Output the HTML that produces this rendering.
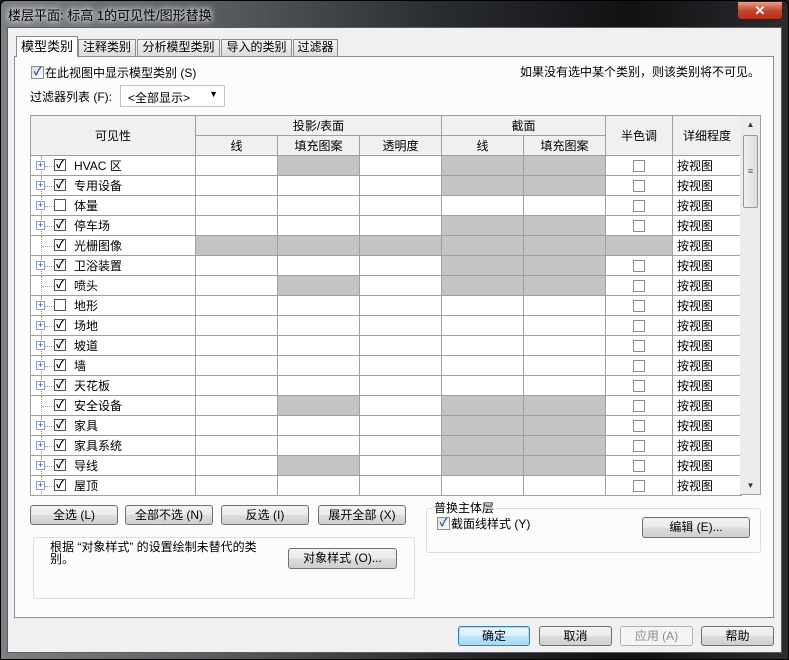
<!DOCTYPE html>
<html><head><meta charset="utf-8"><style>
*{box-sizing:border-box;margin:0;padding:0}
body{width:789px;height:660px;overflow:hidden;background:#1a1c1f;font-family:"Liberation Sans","Noto Sans CJK SC",sans-serif;font-size:12px;color:#000;position:relative}
.abs{position:absolute}
#frame{left:0;top:0;width:789px;height:660px;background:linear-gradient(90deg,#7c8085 0%,#5c6066 25%,#2a2d31 55%,#101113 80%,#2a2c2f 100%);border:1px solid #000;border-radius:6px 6px 0 0}
#title{left:8px;top:5px;font-size:13px;color:#000;text-shadow:0 0 6px #fff,0 0 8px #fff}
#close{left:737px;top:1px;width:46px;height:19px;border:1px solid #3b1a14;border-radius:0 0 4px 4px;background:linear-gradient(#e8a08c,#c7452c 50%,#b3301a);color:#fff;font-weight:bold;text-align:center;font-size:13px;line-height:17px}
#client{left:7px;top:27px;width:775px;height:626px;background:#f0f0f0;border:1px solid #5b5f64}
.tab{top:39px;height:17px;border:1px solid #898c95;border-bottom:none;background:linear-gradient(#f2f2f2,#dcdcdc);font-size:12px;text-align:center;line-height:15px}
.tab.sel{top:36px;height:21px;background:#fcfcfc;z-index:2;line-height:20px;font-size:13px}
#panel{left:14px;top:56px;width:760px;height:562px;border:1px solid #898c95;background:#fcfcfc}
.chk{width:13px;height:13px;border:1px solid #8e8f8f;background:linear-gradient(135deg,#dcdcdc,#fff);font-size:11px;line-height:11px;color:#2b4a9a;text-align:center;font-weight:bold}
table{border-collapse:collapse;table-layout:fixed;position:absolute;left:30px;top:115px}
td{border:1px solid #a0a0a0;height:20px;padding:0;background:#fff;font-size:12px;white-space:nowrap;overflow:hidden}
th{border:1px solid #a0a0a0;border-color:#a0a0a0;height:20px;background:#f0f0f0;font-weight:normal;font-size:12px}
td.h{background:repeating-conic-gradient(#8a8a8a 0 25%,#fff 0 50%) 0 0/2px 2px}
td.c{text-align:center}
.sq{display:inline-block;width:12px;height:12px;border:1px solid #8a8a8a;vertical-align:middle;background:#fff}
td.v{position:relative;padding-left:43px}
.pl{position:absolute;left:5px;top:5px;width:9px;height:9px;border:1px solid #8aa0c0;background:#fff;font-size:9px;line-height:7px;text-align:center;color:#2a3f80}
.dl{position:absolute;left:10px;top:0;height:20px;border-left:1px dotted #999}
.dh{position:absolute;left:14px;top:10px;width:9px;border-top:1px dotted #999}
.dh2{left:11px;width:12px}
.cb{position:absolute;left:23px;top:3px;width:12px;height:12px;border:1px solid #555;background:#fff;font-size:11px;line-height:10px;text-align:center;font-weight:bold}
td.d{padding-left:4px}
.btn{height:20px;border:1px solid #707070;border-radius:3px;background:linear-gradient(#f2f2f2 0,#ebebeb 50%,#dddddd 51%,#cfcfcf);text-align:center;line-height:18px;font-size:12px}
.grp{border:1px solid #d5dfe5;border-radius:3px}
</style></head><body>
<div id="frame" class="abs"></div>
<div id="title" class="abs">楼层平面: 标高 1的可见性/图形替换</div>
<div id="close" class="abs">✕</div>
<div id="client" class="abs"></div>
<div id="panel" class="abs"></div>
<div class="abs tab sel" style="left:16px;width:62px">模型类别</div>
<div class="abs tab" style="left:78px;width:58px">注释类别</div>
<div class="abs tab" style="left:137px;width:83px">分析模型类别</div>
<div class="abs tab" style="left:221px;width:71px">导入的类别</div>
<div class="abs tab" style="left:293px;width:45px">过滤器</div>

<div class="abs chk" style="left:31px;top:66px">✓</div>
<div class="abs" style="left:45px;top:64px">在此视图中显示模型类别 (S)</div>
<div class="abs" style="left:520px;top:63px">如果没有选中某个类别，则该类别将不可见。</div>
<div class="abs" style="left:30px;top:88px">过滤器列表 (F):</div>
<div class="abs" style="left:120px;top:85px;width:105px;height:22px;border:1px solid #c5c5c5;background:#fff;padding:3px 0 0 7px">&lt;全部显示&gt;<span style="position:absolute;right:6px;top:3px;font-size:9px">▼</span></div>

<table>
<colgroup><col style="width:165px"><col style="width:82px"><col style="width:82px"><col style="width:82px"><col style="width:82px"><col style="width:82px"><col style="width:67px"><col style="width:69px"></colgroup>
<tr><th rowspan="2">可见性</th><th colspan="3">投影/表面</th><th colspan="2">截面</th><th rowspan="2">半色调</th><th rowspan="2">详细程度</th></tr>
<tr><th>线</th><th>填充图案</th><th>透明度</th><th>线</th><th>填充图案</th></tr>
<tr><td class="v"><span class="dl"></span><span class="dh"></span><span class="pl">+</span><span class="cb">✓</span>HVAC 区</td><td></td><td class="h"></td><td></td><td class="h"></td><td class="h"></td><td class="c"><span class="sq"></span></td><td class="d">按视图</td></tr>
<tr><td class="v"><span class="dl"></span><span class="dh"></span><span class="pl">+</span><span class="cb">✓</span>专用设备</td><td></td><td></td><td></td><td class="h"></td><td class="h"></td><td class="c"><span class="sq"></span></td><td class="d">按视图</td></tr>
<tr><td class="v"><span class="dl"></span><span class="dh"></span><span class="pl">+</span><span class="cb"></span>体量</td><td></td><td></td><td></td><td></td><td></td><td class="c"><span class="sq"></span></td><td class="d">按视图</td></tr>
<tr><td class="v"><span class="dl"></span><span class="dh"></span><span class="pl">+</span><span class="cb">✓</span>停车场</td><td></td><td></td><td></td><td class="h"></td><td class="h"></td><td class="c"><span class="sq"></span></td><td class="d">按视图</td></tr>
<tr><td class="v"><span class="dl"></span><span class="dh dh2"></span><span class="cb">✓</span>光栅图像</td><td class="h"></td><td class="h"></td><td class="h"></td><td class="h"></td><td class="h"></td><td class="h"></td><td class="d">按视图</td></tr>
<tr><td class="v"><span class="dl"></span><span class="dh"></span><span class="pl">+</span><span class="cb">✓</span>卫浴装置</td><td></td><td></td><td></td><td class="h"></td><td class="h"></td><td class="c"><span class="sq"></span></td><td class="d">按视图</td></tr>
<tr><td class="v"><span class="dl"></span><span class="dh dh2"></span><span class="cb">✓</span>喷头</td><td></td><td class="h"></td><td></td><td class="h"></td><td class="h"></td><td class="c"><span class="sq"></span></td><td class="d">按视图</td></tr>
<tr><td class="v"><span class="dl"></span><span class="dh"></span><span class="pl">+</span><span class="cb"></span>地形</td><td></td><td></td><td></td><td></td><td></td><td class="c"><span class="sq"></span></td><td class="d">按视图</td></tr>
<tr><td class="v"><span class="dl"></span><span class="dh"></span><span class="pl">+</span><span class="cb">✓</span>场地</td><td></td><td></td><td></td><td></td><td></td><td class="c"><span class="sq"></span></td><td class="d">按视图</td></tr>
<tr><td class="v"><span class="dl"></span><span class="dh"></span><span class="pl">+</span><span class="cb">✓</span>坡道</td><td></td><td></td><td></td><td></td><td></td><td class="c"><span class="sq"></span></td><td class="d">按视图</td></tr>
<tr><td class="v"><span class="dl"></span><span class="dh"></span><span class="pl">+</span><span class="cb">✓</span>墙</td><td></td><td></td><td></td><td></td><td></td><td class="c"><span class="sq"></span></td><td class="d">按视图</td></tr>
<tr><td class="v"><span class="dl"></span><span class="dh"></span><span class="pl">+</span><span class="cb">✓</span>天花板</td><td></td><td></td><td></td><td></td><td></td><td class="c"><span class="sq"></span></td><td class="d">按视图</td></tr>
<tr><td class="v"><span class="dl"></span><span class="dh dh2"></span><span class="cb">✓</span>安全设备</td><td></td><td class="h"></td><td></td><td class="h"></td><td class="h"></td><td class="c"><span class="sq"></span></td><td class="d">按视图</td></tr>
<tr><td class="v"><span class="dl"></span><span class="dh"></span><span class="pl">+</span><span class="cb">✓</span>家具</td><td></td><td></td><td></td><td class="h"></td><td class="h"></td><td class="c"><span class="sq"></span></td><td class="d">按视图</td></tr>
<tr><td class="v"><span class="dl"></span><span class="dh"></span><span class="pl">+</span><span class="cb">✓</span>家具系统</td><td></td><td></td><td></td><td class="h"></td><td class="h"></td><td class="c"><span class="sq"></span></td><td class="d">按视图</td></tr>
<tr><td class="v"><span class="dl"></span><span class="dh"></span><span class="pl">+</span><span class="cb">✓</span>导线</td><td></td><td class="h"></td><td></td><td class="h"></td><td class="h"></td><td class="c"><span class="sq"></span></td><td class="d">按视图</td></tr>
<tr><td class="v"><span class="dl"></span><span class="dh"></span><span class="pl">+</span><span class="cb">✓</span>屋顶</td><td></td><td></td><td></td><td></td><td></td><td class="c"><span class="sq"></span></td><td class="d">按视图</td></tr>
</table>
<div class="abs" style="left:740px;top:115px;width:21px;height:380px;border:1px solid #a0a0a0;border-left:none;background:#ececec"></div>
<div class="abs" style="left:741px;top:116px;width:19px;height:18px;text-align:center;font-size:8px;line-height:18px;color:#333">▲</div>
<div class="abs" style="left:743px;top:135px;width:15px;height:73px;border:1px solid #999;border-radius:2px;background:linear-gradient(90deg,#f0f0f0,#dcdcdc);text-align:center;line-height:70px;font-size:9px;color:#555">≡</div>
<div class="abs" style="left:741px;top:477px;width:19px;height:17px;text-align:center;font-size:8px;line-height:17px;color:#333">▼</div>

<div class="abs btn" style="left:30px;top:505px;width:88px">全选 (L)</div>
<div class="abs btn" style="left:125px;top:505px;width:88px">全部不选 (N)</div>
<div class="abs btn" style="left:221px;top:505px;width:88px">反选 (I)</div>
<div class="abs btn" style="left:318px;top:505px;width:88px">展开全部 (X)</div>

<div class="abs grp" style="left:33px;top:537px;width:382px;height:62px"></div>
<div class="abs" style="left:50px;top:541px;line-height:12px;width:230px">根据 “对象样式” 的设置绘制未替代的类别。</div>
<div class="abs btn" style="left:288px;top:548px;width:109px;height:21px">对象样式 (O)...</div>

<div class="abs grp" style="left:426px;top:508px;width:335px;height:45px"></div>
<div class="abs" style="left:432px;top:499px;background:#fcfcfc;padding:0 2px">普换主体层</div>
<div class="abs chk" style="left:437px;top:517px">✓</div>
<div class="abs" style="left:451px;top:515px">截面线样式 (Y)</div>
<div class="abs btn" style="left:642px;top:517px;width:108px;height:21px">编辑 (E)...</div>

<div class="abs btn" style="left:458px;top:626px;width:72px;border-color:#3c7fb1;background:linear-gradient(#eaf6fd,#d9f0fc 50%,#bee6fd 51%,#a7d9f5);box-shadow:inset 0 0 0 1px #9ddcfa">确定</div>
<div class="abs btn" style="left:539px;top:626px;width:73px">取消</div>
<div class="abs btn" style="left:620px;top:626px;width:73px;color:#8d8d8d;border-color:#adb2b5;background:#f4f4f4">应用 (A)</div>
<div class="abs btn" style="left:701px;top:626px;width:73px">帮助</div>
</body></html>
